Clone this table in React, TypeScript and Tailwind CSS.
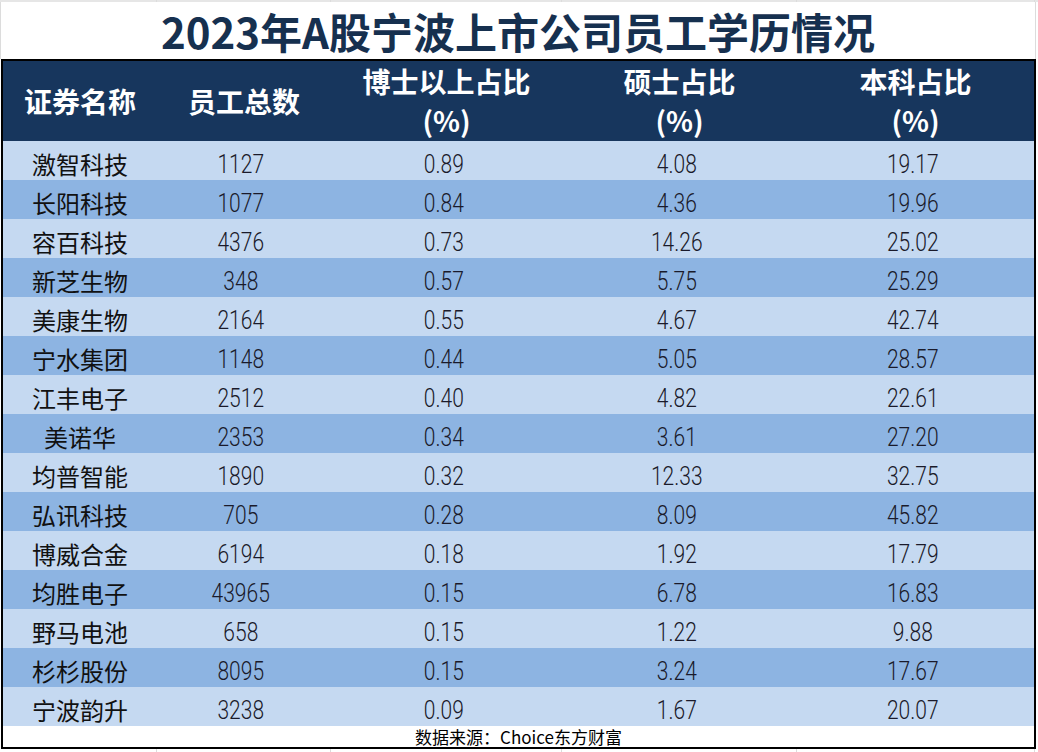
const rows = [
  ["激智科技", "1127", "0.89", "4.08", "19.17"],
  ["长阳科技", "1077", "0.84", "4.36", "19.96"],
  ["容百科技", "4376", "0.73", "14.26", "25.02"],
  ["新芝生物", "348", "0.57", "5.75", "25.29"],
  ["美康生物", "2164", "0.55", "4.67", "42.74"],
  ["宁水集团", "1148", "0.44", "5.05", "28.57"],
  ["江丰电子", "2512", "0.40", "4.82", "22.61"],
  ["美诺华", "2353", "0.34", "3.61", "27.20"],
  ["均普智能", "1890", "0.32", "12.33", "32.75"],
  ["弘讯科技", "705", "0.28", "8.09", "45.82"],
  ["博威合金", "6194", "0.18", "1.92", "17.79"],
  ["均胜电子", "43965", "0.15", "6.78", "16.83"],
  ["野马电池", "658", "0.15", "1.22", "9.88"],
  ["杉杉股份", "8095", "0.15", "3.24", "17.67"],
  ["宁波韵升", "3238", "0.09", "1.67", "20.07"],
]

const cols = "grid grid-cols-[154px_174px_231px_235px_237px]"

function GridStrip() {
  return (
    <div className="flex h-full">
      <div className="w-[157px] border-r border-[#dcdcdc]" />
      <div className="w-[174px] border-r border-[#dcdcdc]" />
      <div className="w-[231px] border-r border-[#dcdcdc]" />
      <div className="w-[235px] border-r border-[#dcdcdc]" />
      <div className="w-[238px] border-r border-[#dcdcdc]" />
    </div>
  )
}

export default function App() {
  return (
    <div className="w-[1038px] h-[752px] bg-white overflow-hidden font-['Noto_Sans_CJK_SC',sans-serif]">
      <div className="h-[2px] bg-[#e6e6e6]">
        <GridStrip />
      </div>
      <div className="h-[57px] w-[1036px] border-l border-r border-[#dcdcdc] flex items-center justify-center">
        <h1 className="text-[42px] font-bold text-[#16304f] leading-none">
          2023年A股宁波上市公司员工学历情况
        </h1>
      </div>
      <div className="ml-[1px] w-[1035px] border-2 border-black">
        <div className={`${cols} h-[80px] bg-[#17365d] text-white font-bold text-[28px]`}>
          <div className="flex items-center justify-center">证券名称</div>
          <div className="flex items-center justify-center">员工总数</div>
          <div className="flex flex-col items-center justify-center leading-[39px]">
            <span>博士以上占比</span>
            <span>(%)</span>
          </div>
          <div className="flex flex-col items-center justify-center leading-[39px]">
            <span>硕士占比</span>
            <span>(%)</span>
          </div>
          <div className="flex flex-col items-center justify-center leading-[39px]">
            <span>本科占比</span>
            <span>(%)</span>
          </div>
        </div>
        {rows.map((r, i) => (
          <div
            key={r[0]}
            className={`${cols} h-[39px] ${i % 2 === 0 ? "bg-[#c5d9f1]" : "bg-[#8db4e2]"} text-[#111]`}
          >
            <div className="flex items-center justify-center pt-[4px] text-[24px]">{r[0]}</div>
            {r.slice(1).map((v, j) => (
              <div key={j} className="flex items-center justify-center pt-[5px] pr-[6px]">
                <span className="inline-block scale-x-[0.84] text-[25px] font-light text-[#1a1a2a] font-['Roboto','Liberation_Sans',sans-serif]">
                  {v}
                </span>
              </div>
            ))}
          </div>
        ))}
        <div className="h-[21px] flex items-center justify-center text-[17px] text-black leading-none">
          数据来源：Choice东方财富
        </div>
      </div>
      <div className="h-[3px]">
        <GridStrip />
      </div>
    </div>
  )
}
